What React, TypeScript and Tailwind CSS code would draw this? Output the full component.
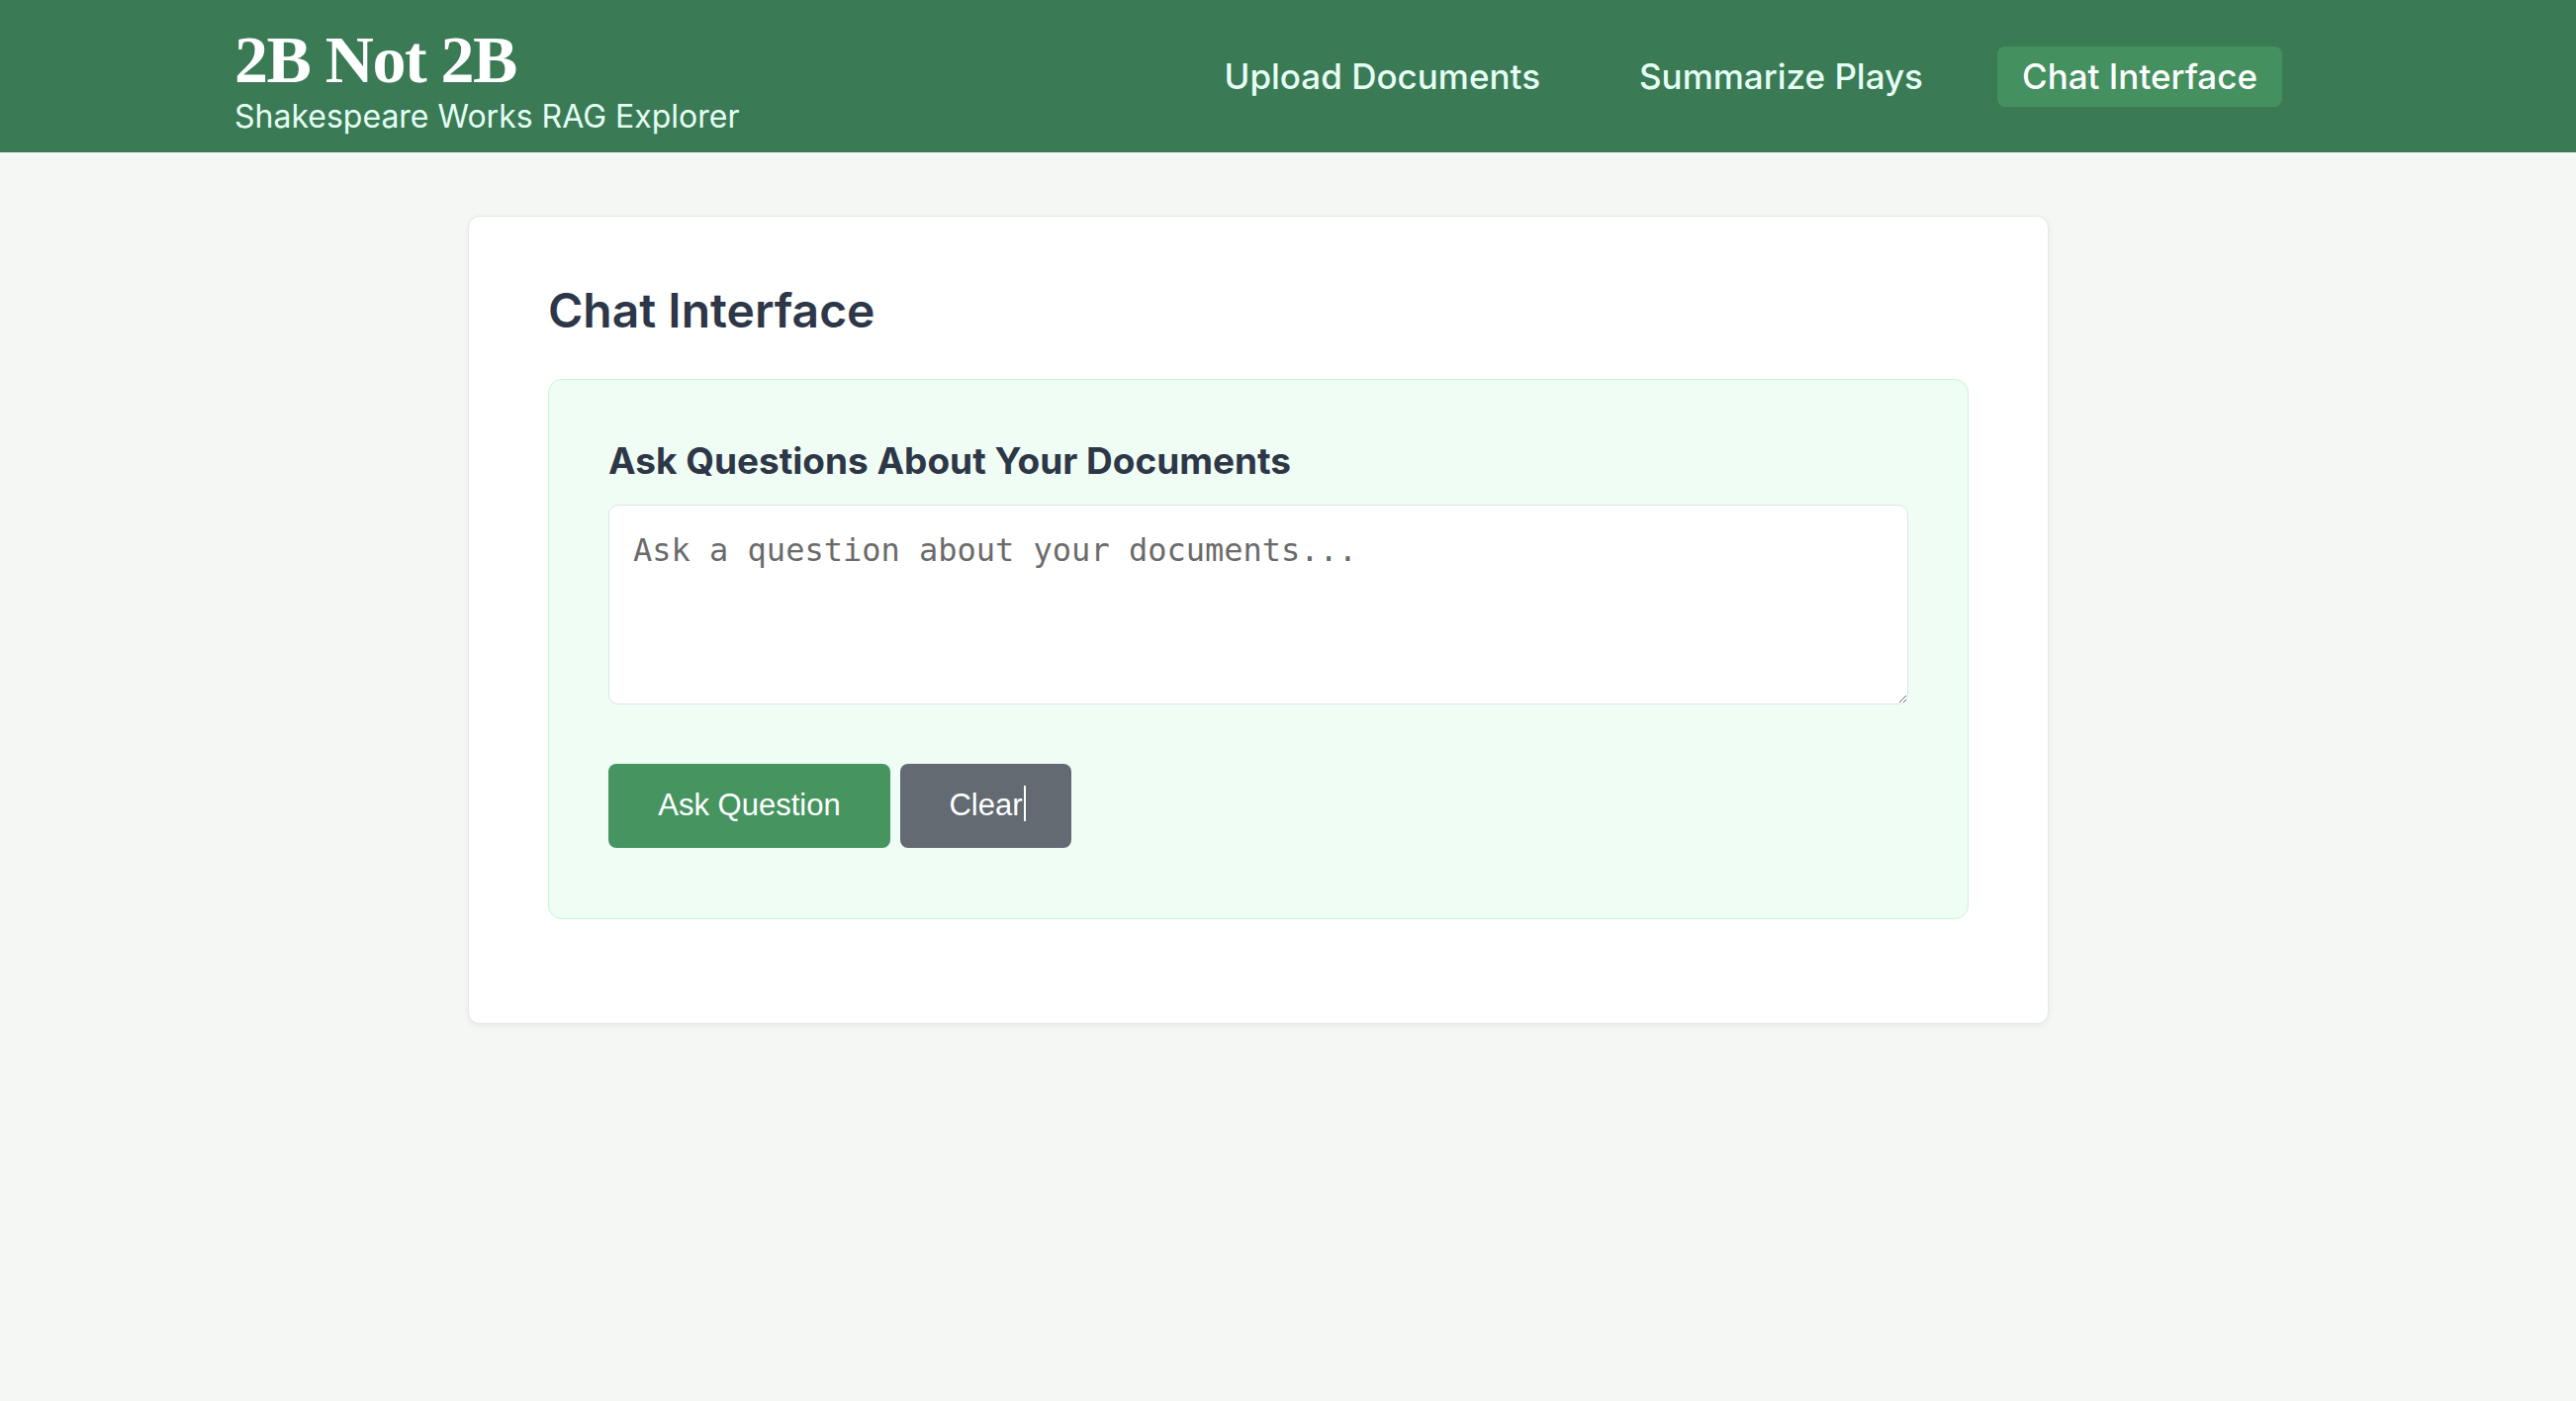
import React from "react";

export default function App() {
  return (
    <div className="min-h-[1416px] bg-[#f5f7f5] font-['Inter',_'Noto_Sans',_sans-serif]">
      <header className="h-[154px] bg-[#3a7a55] pr-[60px]">
        <div className="max-w-[2070px] mx-auto h-full flex justify-between">
          <div className="pt-[26px]">
            <div className="font-['Liberation_Serif',_'DejaVu_Serif',_serif] font-bold text-[68px] leading-[68px] tracking-[-1.5px] text-white">
              2B Not 2B
            </div>
            <div className="mt-[5px] text-[32px] leading-[38px] text-[#e6fff4]">
              Shakespeare Works RAG Explorer
            </div>
          </div>
          <nav className="flex items-center gap-[50px]">
            <a className="px-[25px] py-[10px] rounded-[8px] text-[35px] leading-[41px] font-medium text-[#e6fff4]">
              Upload Documents
            </a>
            <a className="px-[25px] py-[10px] rounded-[8px] text-[35px] leading-[41px] font-medium text-[#e6fff4]">
              Summarize Plays
            </a>
            <a className="px-[25px] py-[10px] rounded-[8px] text-[35px] leading-[41px] font-medium text-white bg-[#45905f]">
              Chat Interface
            </a>
          </nav>
        </div>
      </header>

      <main className="pr-[60px] pt-[64px]">
        <section className="mx-auto w-[1598px] bg-white border-[1.5px] border-[#e2e8f0] rounded-[12px] shadow-[0_2px_6px_rgba(0,0,0,0.06)] px-[80px] pt-[66px] pb-[105px]">
          <h2 className="text-[48px] leading-[58px] font-semibold text-[#2d3748]">
            Chat Interface
          </h2>
          <div className="mt-[40px] bg-[#f0fdf4] border-[1.5px] border-[#c6f6d5] rounded-[14px] px-[60px] pt-[60px] pb-[71px]">
            <h3 className="text-[37px] leading-[44px] font-bold text-[#2d3748]">
              Ask Questions About Your Documents
            </h3>
            <textarea
              className="mt-[22px] block w-full h-[202px] bg-white border-[1.5px] border-[#dde3ee] rounded-[10px] px-[24px] pt-[21px] pb-[24px] font-['DejaVu_Sans_Mono',_monospace] text-[32px] text-[#333] placeholder:text-[#6b6b6b] outline-none"
              placeholder="Ask a question about your documents..."
            />
            <div className="mt-[60px] flex gap-[10px]">
              <button className="w-[285px] h-[85px] rounded-[8px] bg-[#46945f] text-white font-['Liberation_Sans',_Arial,_sans-serif] text-[31px]">
                Ask Question
              </button>
              <button className="w-[173px] h-[85px] rounded-[8px] bg-[#636a72] text-white font-['Liberation_Sans',_Arial,_sans-serif] text-[31px]">
                <span className="relative">
                  Clear
                  <span className="absolute right-[-3px] top-[-2px] w-[2px] h-[36px] bg-white" />
                </span>
              </button>
            </div>
          </div>
        </section>
      </main>
    </div>
  );
}
